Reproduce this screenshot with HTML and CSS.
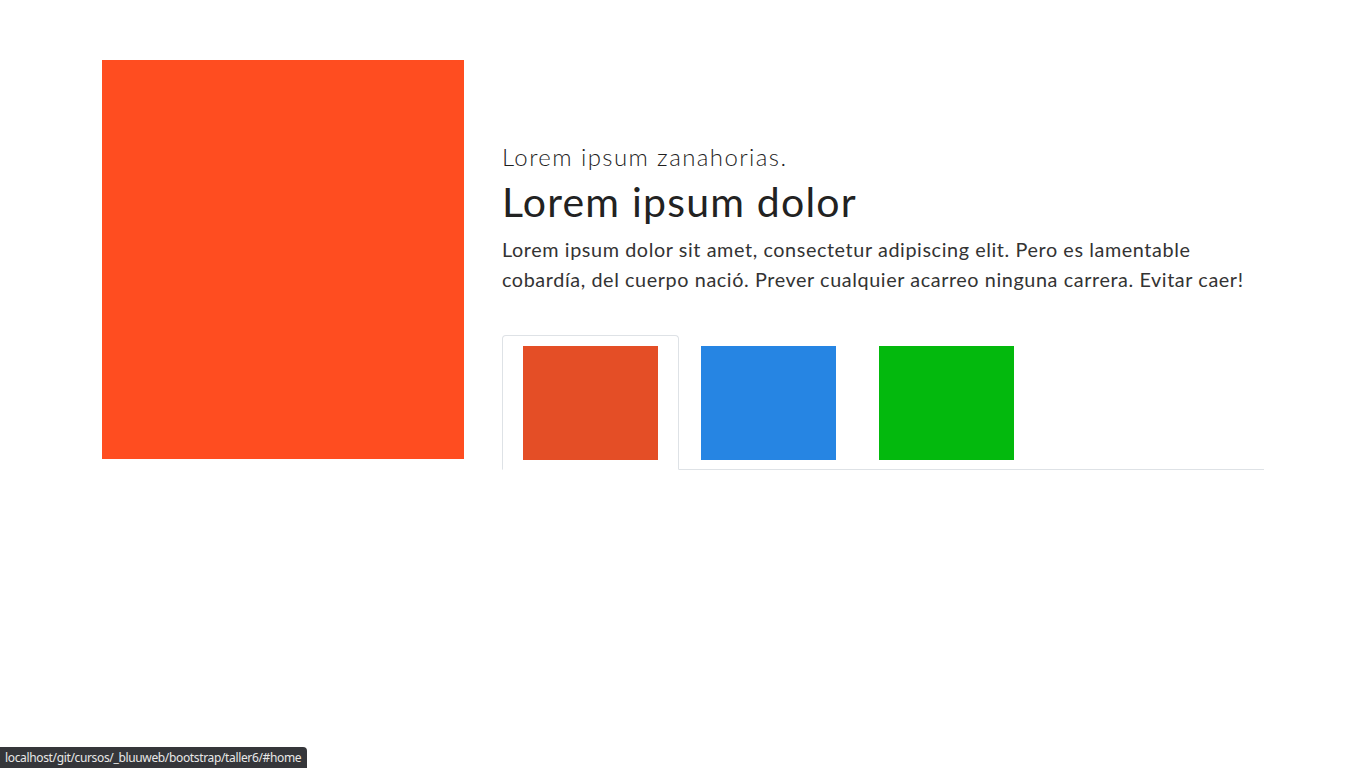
FILE: index.html
```html
<!DOCTYPE html>
<html lang="es">
<head>
<meta charset="utf-8">
<title>Taller 6</title>
<link rel="stylesheet" href="styles.css">
</head>
<body>
<main class="hero">
  <div class="hero-image"></div>
  <div class="hero-text">
    <p class="kicker">Lorem ipsum zanahorias.</p>
    <h1 class="title">Lorem ipsum dolor</h1>
    <p class="lead">Lorem ipsum dolor sit amet, consectetur adipiscing elit. Pero es lamentable cobardía, del cuerpo nació. Prever cualquier acarreo ninguna carrera. Evitar caer!</p>
    <ul class="tabs">
      <li class="tab active"><a href="#home" class="tab-link"><span class="swatch swatch-orange"></span></a></li>
      <li class="tab"><a href="#css" class="tab-link"><span class="swatch swatch-blue"></span></a></li>
      <li class="tab"><a href="#js" class="tab-link"><span class="swatch swatch-green"></span></a></li>
    </ul>
  </div>
</main>
<div class="status">localhost/git/cursos/_bluuweb/bootstrap/taller6/#home</div>
</body>
</html>
```

FILE: styles.css
```css
* { box-sizing: border-box; }
html, body { margin: 0; padding: 0; background: #fff; }
body {
  font-family: "Lato", "Open Sans", sans-serif;
  color: #212529;
}
.hero {
  display: flex;
  gap: 38px;
  padding: 60px 102px 0 102px;
}
.hero-image {
  width: 362px;
  height: 399px;
  background: #ff4d20;
  flex: none;
}
.hero-text {
  width: 762px;
  padding-top: 80px;
}
.kicker {
  margin: 0;
  font-size: 24px;
  line-height: 33px;
  letter-spacing: 1.4px;
  color: #1f1f1f;
  font-weight: 300;
}
.title {
  margin: 5px 0 0;
  font-size: 41px;
  line-height: 48px;
  letter-spacing: 1.2px;
  font-weight: 400;
  color: #222;
}
.lead {
  margin: 8px 0 0;
  max-width: 752px;
  font-size: 19.8px;
  line-height: 30px;
  letter-spacing: 0.6px;
  color: #333;
}
.tabs {
  list-style: none;
  margin: 41px 0 0;
  padding: 0;
  display: flex;
  border-bottom: 1px solid #dee2e6;
}
.tab { margin-bottom: -1px; }
.tab-link {
  display: block;
  padding: 10px 20px 9px;
  border: 1px solid transparent;
  border-radius: 4px 4px 0 0;
}
.tab.active .tab-link {
  border-color: #dee2e6 #dee2e6 #fff;
  background: #fff;
}
.tab + .tab .tab-link { margin-left: 1px; }
.swatch {
  display: block;
  width: 135px;
  height: 114px;
}
.swatch-orange { background: #e44e26; }
.swatch-blue { background: #2685e3; }
.swatch-green { background: #03b90d; }
.status {
  position: fixed;
  left: 0;
  bottom: 0;
  height: 21px;
  padding: 0 6px 0 5px;
  background: #35363a;
  color: #e8e8e8;
  font-family: "Noto Sans", "Open Sans", sans-serif;
  font-size: 12px;
  letter-spacing: -0.35px;
  line-height: 21px;
  border-top-right-radius: 4px;
}
```
